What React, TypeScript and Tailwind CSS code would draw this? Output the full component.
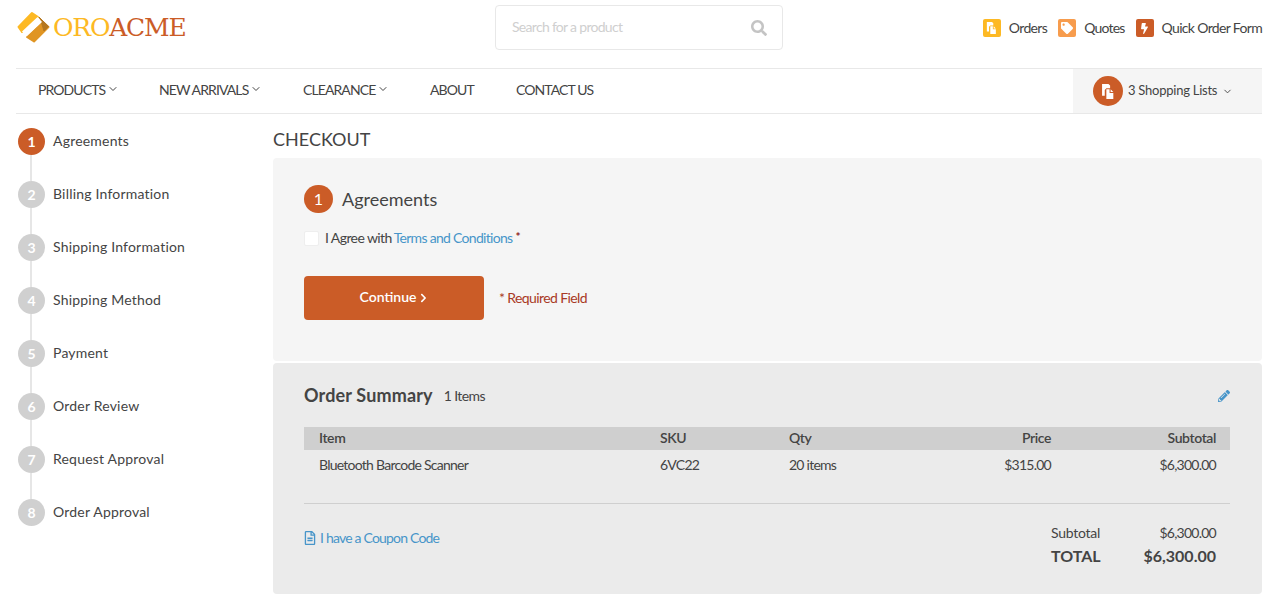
import { FaBolt, FaChevronRight, FaPencilAlt, FaRegFileAlt, FaSearch, FaTag } from "react-icons/fa";
import { LuChevronDown } from "react-icons/lu";

const steps = [
  "Agreements",
  "Billing Information",
  "Shipping Information",
  "Shipping Method",
  "Payment",
  "Order Review",
  "Request Approval",
  "Order Approval",
];

const navItems = [
  { label: "PRODUCTS", caret: true, className: "w-[121px]" },
  { label: "NEW ARRIVALS", caret: true, className: "w-[144px]" },
  { label: "CLEARANCE", caret: true, className: "w-[127px]" },
  { label: "ABOUT", caret: false, className: "w-[86px]" },
  { label: "CONTACT US", caret: false, className: "" },
];

function FilesIcon({ className }: { className: string }) {
  return (
    <svg viewBox="0 0 14 14" className={className} fill="currentColor">
      <path d="M1 0h6l1.5 1.5V4H5L3.5 5.5V11H1z" />
      <path d="M5 5h3v3.5h3.5V14H5z" />
      <path d="M9 5l2.5 2.5H9z" />
    </svg>
  );
}

function Logo() {
  return (
    <div className="flex items-center">
      <svg viewBox="0 0 33 32" className="h-[32px] w-[33px]" strokeLinejoin="round">
        <path d="M1.5 16 L15 2 L21 6 L5 21z" fill="#fdb924" stroke="#fdb924" strokeWidth="2" />
        <path d="M10 26 L26 11 L31.5 16 L17 30.5z" fill="#e09523" stroke="#e09523" strokeWidth="2" />
        <path d="M22 6 L31.5 15.5 L27 20 L24 10z" fill="#b5771f" stroke="#b5771f" strokeWidth="1" />
        <path d="M5 20.5 L20.5 6 L25 11 L9.5 25.5z" fill="#ffffff" />
      </svg>
      <span className="ml-[3px] font-['DejaVu_Serif',serif] text-[25px] leading-none tracking-[-1.2px] text-[#fdb924]">
        ORO<span className="text-[#cb5c27]">ACME</span>
      </span>
    </div>
  );
}

export default function App() {
  return (
    <div className="h-[610px] w-[1284px] overflow-hidden bg-white font-['Lato',sans-serif] text-[14px] text-[#444444]">
      {/* top header */}
      <div className="ml-4 mr-[22px] flex h-[69px] items-start border-b border-[#e8e8e8]">
        <div className="w-[479px] pl-[1px] pt-[11px]">
          <Logo />
        </div>
        <div className="mt-[5px] flex h-[45px] w-[288px] items-center justify-between rounded border border-[#e8e8e8] pl-4 pr-[15px]">
          <span className="pb-[2px] tracking-[-0.7px] text-[#cfcfcf]">Search for a product</span>
          <FaSearch className="h-4 w-4 text-[#c4c4c4]" />
        </div>
        <div className="ml-auto mt-[19px] flex h-[18px] items-center">
          <span className="flex h-[18px] w-[18px] items-center justify-center rounded-[2px] bg-[#fdb924] text-white">
            <FilesIcon className="h-[12px] w-[12px]" />
          </span>
          <span className="ml-2 pb-[1px] tracking-[-0.65px]">Orders</span>
          <span className="ml-[11px] flex h-[18px] w-[18px] items-center justify-center rounded-[2px] bg-[#f79c4d] text-white">
            <FaTag className="h-[12px] w-[12px]" />
          </span>
          <span className="ml-2 pb-[1px] tracking-[-0.8px]">Quotes</span>
          <span className="ml-[11px] flex h-[18px] w-[18px] items-center justify-center rounded-[2px] bg-[#cb5c27] text-white">
            <FaBolt className="h-[11px] w-[11px]" />
          </span>
          <span className="ml-2 pb-[1px] tracking-[-0.66px]">Quick Order Form</span>
        </div>
      </div>

      {/* nav */}
      <div className="ml-4 mr-[22px] flex h-[45px] items-center border-b border-[#e8e8e8] pl-[22px]">
        {navItems.map((item) => (
          <div key={item.label} className={`flex items-center pb-[4px] tracking-[-0.9px] ${item.className}`}>
            {item.label}
            {item.caret && <LuChevronDown className="ml-[2px] h-[12px] w-[12px]" />}
          </div>
        ))}
        <div className="ml-auto flex h-full w-[189px] items-center bg-[#f5f5f5] pl-5">
          <span className="flex h-[30px] w-[30px] items-center justify-center rounded-full bg-[#cb5c27] text-white">
            <FilesIcon className="h-[15px] w-[15px]" />
          </span>
          <span className="ml-[5px] text-[13px] tracking-[-0.25px]">3 Shopping Lists</span>
          <LuChevronDown className="ml-[5px] h-[11px] w-[11px]" />
        </div>
      </div>

      <div className="flex pl-[18px] pr-[22px]">
        {/* sidebar steps */}
        <div className="w-[255px] pt-[14px]">
          {steps.map((step, i) => (
            <div key={step} className="flex h-[53px] items-start">
              <div className="relative h-[53px] w-[27px]">
                <div
                  className={`flex h-[27px] w-[27px] items-center justify-center rounded-full text-[14px] font-bold text-white ${
                    i === 0 ? "bg-[#cb5c27]" : "bg-[#d0d0d0]"
                  }`}
                >
                  {i + 1}
                </div>
                {i < steps.length - 1 && (
                  <div className="absolute left-[12px] top-[27px] h-[26px] w-[2px] bg-[#e6e6e6]" />
                )}
              </div>
              <span className="ml-2 mt-[4px] leading-[17px] tracking-[0.2px]">{step}</span>
            </div>
          ))}
        </div>

        {/* main */}
        <div className="flex-1">
          <h1 className="flex h-[44px] items-center pt-[6px] text-[18px] font-normal text-[#444444]">CHECKOUT</h1>

          <div className="h-[203px] rounded bg-[#f5f5f5] pl-[31px] pt-[27px]">
            <div className="flex items-center">
              <span className="flex h-[28px] w-[29px] items-center justify-center rounded-full bg-[#cb5c27] text-[16px] text-white">1</span>
              <span className="ml-[9px] text-[18px]">Agreements</span>
            </div>
            <div className="mt-[14px] flex items-center">
              <span className="mt-[1px] h-[15px] w-[15px] rounded-[2px] border border-[#eeeeee] bg-white" />
              <span className="ml-[6px] tracking-[-0.6px]">I Agree with</span>
              <span className="ml-[2px] tracking-[-0.7px] text-[#4795c9]">Terms and Conditions</span>
              <span className="mb-[2px] ml-[3px] text-[12px] font-bold text-[#8f1d1d]">*</span>
            </div>
            <div className="mt-[28px] flex items-center">
              <button className="flex h-[44px] w-[180px] items-center justify-center rounded bg-[#cb5c27] text-white">
                <span className="pb-[3px] font-semibold">Continue</span>
                <FaChevronRight className="ml-[3px] h-[10px] w-[9px]" />
              </button>
              <span className="ml-[15px] pb-[2px] tracking-[-0.6px] text-[#a93a25]">* Required Field</span>
            </div>
          </div>

          <div className="mt-[2px] h-[231px] rounded bg-[#ebebeb] pl-[31px] pr-[32px] pt-[20px]">
            <div className="flex h-[24px] items-center justify-between">
              <div className="flex items-center">
                <span className="text-[18px] font-bold tracking-[0.15px]">Order Summary</span>
                <span className="ml-[11px] tracking-[-0.6px]">1 Items</span>
              </div>
              <FaPencilAlt className="mt-[2px] h-[12px] w-[12px] text-[#4795c9]" />
            </div>
            <div className="mt-[20px] flex h-[23px] items-center bg-[#cfcfcf] pl-[15px] pr-[14px] tracking-[-0.4px]">
              <span className="w-[341px] pb-[3px] font-semibold">Item</span>
              <span className="w-[129px] pb-[3px] font-semibold">SKU</span>
              <span className="w-[100px] pb-[3px] font-semibold">Qty</span>
              <span className="w-[162px] pb-[3px] text-right font-semibold">Price</span>
              <span className="flex-1 pb-[3px] text-right font-semibold">Subtotal</span>
            </div>
            <div className="flex h-[31px] items-center pb-[2px] pl-[15px] pr-[14px] tracking-[-0.75px]">
              <span className="w-[341px]">Bluetooth Barcode Scanner</span>
              <span className="w-[129px]">6VC22</span>
              <span className="w-[100px]">20 items</span>
              <span className="w-[162px] text-right">$315.00</span>
              <span className="flex-1 text-right">$6,300.00</span>
            </div>
            <div className="mt-[22px] flex items-start justify-between border-t border-[#cfcfcf] pr-[14px] pt-[18px]">
              <div className="mt-[5px] flex items-center text-[#4795c9]">
                <FaRegFileAlt className="h-[14px] w-[12px]" />
                <span className="ml-[4px] tracking-[-0.8px]">I have a Coupon Code</span>
              </div>
              <div className="w-[165px]">
                <div className="flex justify-between">
                  <span className="tracking-[-0.25px]">Subtotal</span>
                  <span className="tracking-[-0.75px]">$6,300.00</span>
                </div>
                <div className="mt-[1px] flex justify-between text-[16px] font-bold">
                  <span>TOTAL</span>
                  <span>$6,300.00</span>
                </div>
              </div>
            </div>
          </div>
        </div>
      </div>
    </div>
  );
}
